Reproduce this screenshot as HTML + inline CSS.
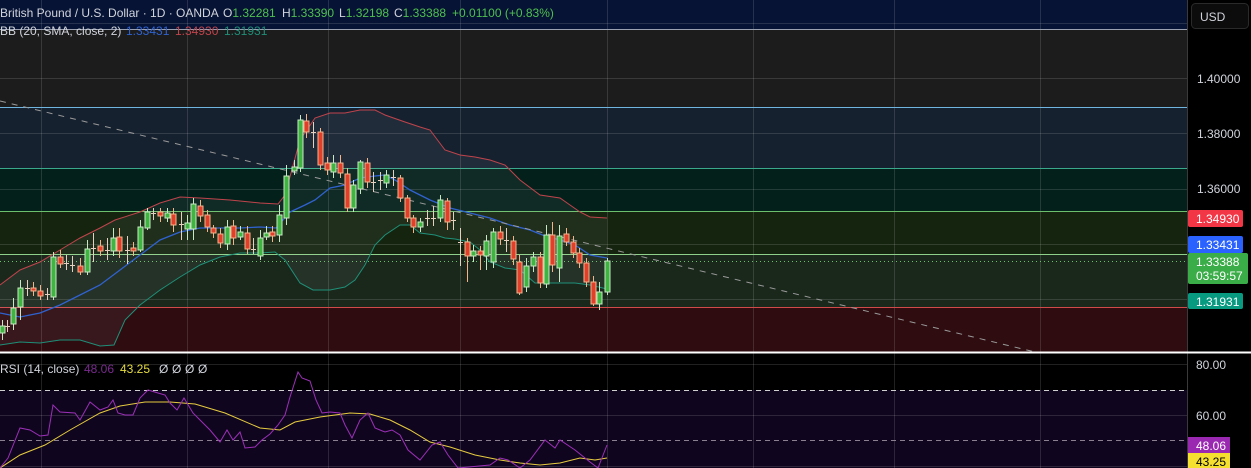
<!DOCTYPE html>
<html><head><meta charset="utf-8"><style>
body{margin:0;background:#000;width:1251px;height:468px;overflow:hidden;font-family:"Liberation Sans",sans-serif}
svg{display:block}
</style></head><body>
<svg width="1251" height="468" xmlns="http://www.w3.org/2000/svg" font-family="Liberation Sans, sans-serif">
<rect x="0" y="0" width="1251" height="468" fill="#000"/>
<rect x="0" y="0" width="1187" height="29" fill="#061334"/>
<rect x="0" y="29" width="1187" height="78" fill="#1c1c1c"/>
<rect x="0" y="107" width="1187" height="61" fill="#15212f"/>
<rect x="0" y="168" width="1187" height="43" fill="#04201b"/>
<rect x="0" y="211" width="1187" height="43" fill="#15240f"/>
<rect x="0" y="254" width="1187" height="53" fill="#1a281c"/>
<rect x="0" y="307" width="1187" height="45" fill="#2e0c10"/>
<rect x="0" y="390" width="1187" height="78" fill="#10051e"/>
<g stroke="#ffffff" stroke-opacity="0.13" stroke-width="1">
<line x1="0" y1="23.5" x2="1187" y2="23.5"/>
<line x1="0" y1="78.5" x2="1187" y2="78.5"/>
<line x1="0" y1="133.5" x2="1187" y2="133.5"/>
<line x1="0" y1="189.5" x2="1187" y2="189.5"/>
<line x1="0" y1="244.5" x2="1187" y2="244.5"/>
<line x1="0" y1="299.5" x2="1187" y2="299.5"/>
<line x1="0" y1="364.5" x2="1187" y2="364.5"/>
<line x1="0" y1="415.5" x2="1187" y2="415.5"/>
<line x1="0" y1="466.5" x2="1187" y2="466.5"/>
<line x1="41.5" y1="0" x2="41.5" y2="468"/>
<line x1="187.5" y1="0" x2="187.5" y2="468"/>
<line x1="328.5" y1="0" x2="328.5" y2="468"/>
<line x1="460.5" y1="0" x2="460.5" y2="468"/>
<line x1="607.5" y1="0" x2="607.5" y2="468"/>
<line x1="753.5" y1="0" x2="753.5" y2="468"/>
<line x1="894.5" y1="0" x2="894.5" y2="468"/>
<line x1="1040.5" y1="0" x2="1040.5" y2="468"/>
</g>
<line x1="0" y1="29.5" x2="1187" y2="29.5" stroke="#9aa0b0"/>
<line x1="0" y1="107.5" x2="1187" y2="107.5" stroke="#6fb5e0"/>
<line x1="0" y1="168.5" x2="1187" y2="168.5" stroke="#3aa88a"/>
<line x1="0" y1="211.5" x2="1187" y2="211.5" stroke="#6cbf6c"/>
<line x1="0" y1="254.5" x2="1187" y2="254.5" stroke="#8fd08a"/>
<line x1="0" y1="261.5" x2="1187" y2="261.5" stroke="#6cbf6c" stroke-dasharray="1 3"/>
<line x1="0" y1="307.5" x2="1187" y2="307.5" stroke="#d04a4a"/>
<line x1="0" y1="352.5" x2="1187" y2="352.5" stroke="#ffffff" stroke-width="2"/>
<line x1="0" y1="390.5" x2="1187" y2="390.5" stroke="#cfcfcf" stroke-dasharray="5 4"/>
<line x1="0" y1="440.5" x2="1187" y2="440.5" stroke="#8a8090" stroke-dasharray="5 4"/>
<polygon fill="#ffffff" fill-opacity="0.05" points="0,285 20,270 40,262 60,250 80,238 100,228 115,220 140,212 160,203 180,197 200,198 230,200 260,203 278,204 285,195 300,140 315,118 330,113 345,113 360,110 375,110 385,115 405,122 420,127 430,130 445,150 460,155 475,157 490,160 505,165 520,180 540,195 560,198 570,205 580,212 590,217 607,218 607,289 590,285 575,283 560,283 545,283 535,283 520,270 505,268 490,262 480,250 470,242 455,239 445,238 435,235 420,233 410,225 400,225 385,235 375,245 365,265 355,280 345,287 330,290 313,290 300,283 285,260 275,252 260,253 240,253 220,257 200,265 180,277 160,290 140,305 125,320 114,345 100,346 80,340 60,340 40,343 20,342 0,345"/>
<polyline fill="none" stroke="#c0444c" stroke-width="1" points="0,285 20,270 40,262 60,250 80,238 100,228 115,220 140,212 160,203 180,197 200,198 230,200 260,203 278,204 285,195 300,140 315,118 330,113 345,113 360,110 375,110 385,115 405,122 420,127 430,130 445,150 460,155 475,157 490,160 505,165 520,180 540,195 560,198 570,205 580,212 590,217 607,218"/>
<polyline fill="none" stroke="#2f62d0" stroke-width="1.3" points="0,313 20,317 40,313 60,305 80,295 100,285 120,270 140,255 160,240 180,232 200,228 220,228 240,228 260,227 276,228 290,212 305,205 315,200 330,188 345,185 360,178 375,176 385,175 395,180 410,190 430,200 450,208 470,213 490,218 510,225 530,230 545,236 560,240 575,245 590,255 607,258"/>
<polyline fill="none" stroke="#1f8f78" stroke-width="1" points="0,345 20,342 40,343 60,340 80,340 100,346 114,345 125,320 140,305 160,290 180,277 200,265 220,257 240,253 260,253 275,252 285,260 300,283 313,290 330,290 345,287 355,280 365,265 375,245 385,235 400,225 410,225 420,233 435,235 445,238 455,239 470,242 480,250 490,262 505,268 520,270 535,283 545,283 560,283 575,283 590,285 607,289"/>
<line x1="0" y1="101" x2="1035" y2="352" stroke="#9a9a9a" stroke-width="1" stroke-dasharray="6 6"/>
<g stroke-width="1">
<g stroke="#c8e8c4" fill="#3fb440">
<line x1="2.5" y1="320" x2="2.5" y2="340"/><rect x="0" y="326" width="5" height="7"/>
<line x1="13.5" y1="298" x2="13.5" y2="330"/><rect x="11" y="308" width="5" height="16"/>
<line x1="20.5" y1="280" x2="20.5" y2="320"/><rect x="18" y="288" width="5" height="19"/>
<line x1="53.5" y1="252" x2="53.5" y2="300"/><rect x="51" y="257" width="5" height="40"/>
<line x1="87.5" y1="240" x2="87.5" y2="275"/><rect x="85" y="249" width="5" height="23"/>
<line x1="113.5" y1="228" x2="113.5" y2="256"/><rect x="111" y="238" width="5" height="13"/>
<line x1="140.5" y1="220" x2="140.5" y2="252"/><rect x="138" y="227" width="5" height="23"/>
<line x1="147.5" y1="208" x2="147.5" y2="230"/><rect x="145" y="212" width="5" height="16"/>
<line x1="167.5" y1="208" x2="167.5" y2="222"/><rect x="165" y="213" width="5" height="5"/>
<line x1="187.5" y1="215" x2="187.5" y2="240"/><rect x="185" y="223" width="5" height="6"/>
<line x1="193.5" y1="198" x2="193.5" y2="240"/><rect x="191" y="204" width="5" height="25"/>
<line x1="227.5" y1="220" x2="227.5" y2="250"/><rect x="225" y="227" width="5" height="17"/>
<line x1="240.5" y1="226" x2="240.5" y2="240"/><rect x="238" y="232" width="5" height="5"/>
<line x1="260.5" y1="230" x2="260.5" y2="260"/><rect x="258" y="238" width="5" height="18"/>
<line x1="266.5" y1="226" x2="266.5" y2="240"/><rect x="264" y="233" width="5" height="4"/>
<line x1="279.5" y1="205" x2="279.5" y2="242"/><rect x="277" y="215" width="5" height="20"/>
<line x1="286.5" y1="165" x2="286.5" y2="225"/><rect x="284" y="176" width="5" height="42"/>
<line x1="294.5" y1="160" x2="294.5" y2="175"/><rect x="292" y="167" width="5" height="4"/>
<line x1="300.5" y1="115" x2="300.5" y2="172"/><rect x="298" y="120" width="5" height="48"/>
<line x1="333.5" y1="155" x2="333.5" y2="178"/><rect x="331" y="163" width="5" height="9"/>
<line x1="353.5" y1="180" x2="353.5" y2="212"/><rect x="351" y="185" width="5" height="23"/>
<line x1="360.5" y1="160" x2="360.5" y2="194"/><rect x="358" y="162" width="5" height="27"/>
<line x1="386.5" y1="170" x2="386.5" y2="188"/><rect x="384" y="175" width="5" height="8"/>
<line x1="420.5" y1="218" x2="420.5" y2="232"/><rect x="418" y="222" width="5" height="5"/>
<line x1="440.5" y1="195" x2="440.5" y2="222"/><rect x="438" y="200" width="5" height="18"/>
<line x1="473.5" y1="245" x2="473.5" y2="262"/><rect x="471" y="251" width="5" height="5"/>
<line x1="486.5" y1="235" x2="486.5" y2="270"/><rect x="484" y="241" width="5" height="15"/>
<line x1="493.5" y1="228" x2="493.5" y2="268"/><rect x="491" y="232" width="5" height="30"/>
<line x1="526.5" y1="258" x2="526.5" y2="292"/><rect x="524" y="266" width="5" height="21"/>
<line x1="533.5" y1="252" x2="533.5" y2="272"/><rect x="531" y="257" width="5" height="9"/>
<line x1="546.5" y1="225" x2="546.5" y2="288"/><rect x="544" y="235" width="5" height="49"/>
<line x1="559.5" y1="225" x2="559.5" y2="282"/><rect x="557" y="236" width="5" height="32"/>
<line x1="599.5" y1="282" x2="599.5" y2="310"/><rect x="597" y="292" width="5" height="12"/>
<line x1="607.5" y1="258" x2="607.5" y2="295"/><rect x="605" y="261" width="5" height="31"/>
</g>
<g stroke="#f3b48c" fill="#e0402a">
<line x1="33.5" y1="282" x2="33.5" y2="296"/><rect x="31" y="288" width="5" height="3"/>
<line x1="40.5" y1="285" x2="40.5" y2="300"/><rect x="38" y="291" width="5" height="5"/>
<line x1="60.5" y1="250" x2="60.5" y2="268"/><rect x="58" y="257" width="5" height="7"/>
<line x1="80.5" y1="258" x2="80.5" y2="275"/><rect x="78" y="266" width="5" height="6"/>
<line x1="100.5" y1="240" x2="100.5" y2="256"/><rect x="98" y="246" width="5" height="5"/>
<line x1="119.5" y1="228" x2="119.5" y2="258"/><rect x="117" y="237" width="5" height="14"/>
<line x1="133.5" y1="242" x2="133.5" y2="256"/><rect x="131" y="248" width="5" height="3"/>
<line x1="160.5" y1="208" x2="160.5" y2="222"/><rect x="158" y="212" width="5" height="4"/>
<line x1="173.5" y1="208" x2="173.5" y2="232"/><rect x="171" y="214" width="5" height="11"/>
<line x1="200.5" y1="200" x2="200.5" y2="222"/><rect x="198" y="206" width="5" height="10"/>
<line x1="207.5" y1="210" x2="207.5" y2="232"/><rect x="205" y="215" width="5" height="12"/>
<line x1="213.5" y1="225" x2="213.5" y2="238"/><rect x="211" y="228" width="5" height="5"/>
<line x1="220.5" y1="228" x2="220.5" y2="248"/><rect x="218" y="234" width="5" height="9"/>
<line x1="233.5" y1="220" x2="233.5" y2="245"/><rect x="231" y="226" width="5" height="12"/>
<line x1="247.5" y1="226" x2="247.5" y2="254"/><rect x="245" y="233" width="5" height="16"/>
<line x1="272.5" y1="226" x2="272.5" y2="242"/><rect x="270" y="232" width="5" height="4"/>
<line x1="306.5" y1="114" x2="306.5" y2="138"/><rect x="304" y="121" width="5" height="11"/>
<line x1="320.5" y1="128" x2="320.5" y2="170"/><rect x="318" y="132" width="5" height="33"/>
<line x1="327.5" y1="157" x2="327.5" y2="175"/><rect x="325" y="163" width="5" height="7"/>
<line x1="340.5" y1="155" x2="340.5" y2="178"/><rect x="338" y="163" width="5" height="10"/>
<line x1="347.5" y1="168" x2="347.5" y2="212"/><rect x="345" y="174" width="5" height="34"/>
<line x1="367.5" y1="158" x2="367.5" y2="188"/><rect x="365" y="163" width="5" height="19"/>
<line x1="400.5" y1="175" x2="400.5" y2="202"/><rect x="398" y="178" width="5" height="20"/>
<line x1="407.5" y1="195" x2="407.5" y2="222"/><rect x="405" y="198" width="5" height="20"/>
<line x1="413.5" y1="215" x2="413.5" y2="233"/><rect x="411" y="218" width="5" height="9"/>
<line x1="447.5" y1="198" x2="447.5" y2="230"/><rect x="445" y="201" width="5" height="21"/>
<line x1="467.5" y1="238" x2="467.5" y2="282"/><rect x="465" y="242" width="5" height="14"/>
<line x1="480.5" y1="246" x2="480.5" y2="270"/><rect x="478" y="251" width="5" height="4"/>
<line x1="500.5" y1="226" x2="500.5" y2="245"/><rect x="498" y="232" width="5" height="7"/>
<line x1="513.5" y1="236" x2="513.5" y2="265"/><rect x="511" y="241" width="5" height="18"/>
<line x1="519.5" y1="255" x2="519.5" y2="295"/><rect x="517" y="262" width="5" height="31"/>
<line x1="540.5" y1="252" x2="540.5" y2="288"/><rect x="538" y="257" width="5" height="26"/>
<line x1="552.5" y1="222" x2="552.5" y2="272"/><rect x="550" y="235" width="5" height="30"/>
<line x1="566.5" y1="228" x2="566.5" y2="246"/><rect x="564" y="234" width="5" height="8"/>
<line x1="573.5" y1="236" x2="573.5" y2="258"/><rect x="571" y="242" width="5" height="11"/>
<line x1="579.5" y1="248" x2="579.5" y2="268"/><rect x="577" y="253" width="5" height="10"/>
<line x1="586.5" y1="258" x2="586.5" y2="287"/><rect x="584" y="263" width="5" height="19"/>
<line x1="593.5" y1="276" x2="593.5" y2="306"/><rect x="591" y="282" width="5" height="22"/>
</g>
<g stroke="#e8d0c0">
<line x1="7.5" y1="320" x2="7.5" y2="332"/><line x1="5" y1="326.5" x2="10" y2="326.5"/>
<line x1="27.5" y1="280" x2="27.5" y2="296"/><line x1="25" y1="288.5" x2="30" y2="288.5"/>
<line x1="47.5" y1="288" x2="47.5" y2="300"/><line x1="45" y1="294.5" x2="50" y2="294.5"/>
<line x1="66.5" y1="255" x2="66.5" y2="270"/><line x1="64" y1="263.5" x2="69" y2="263.5"/>
<line x1="72.5" y1="256" x2="72.5" y2="272"/><line x1="70" y1="265.5" x2="75" y2="265.5"/>
<line x1="93.5" y1="233" x2="93.5" y2="262"/><line x1="91" y1="248.5" x2="96" y2="248.5"/>
<line x1="107.5" y1="238" x2="107.5" y2="260"/><line x1="105" y1="250.5" x2="110" y2="250.5"/>
<line x1="127.5" y1="236" x2="127.5" y2="264"/><line x1="125" y1="250.5" x2="130" y2="250.5"/>
<line x1="153.5" y1="208" x2="153.5" y2="220"/><line x1="151" y1="213.5" x2="156" y2="213.5"/>
<line x1="181.5" y1="212" x2="181.5" y2="240"/><line x1="179" y1="224.5" x2="184" y2="224.5"/>
<line x1="253.5" y1="238" x2="253.5" y2="254"/><line x1="251" y1="249.5" x2="256" y2="249.5"/>
<line x1="313.5" y1="122" x2="313.5" y2="148"/><line x1="311" y1="132.5" x2="316" y2="132.5"/>
<line x1="373.5" y1="172" x2="373.5" y2="192"/><line x1="371" y1="182.5" x2="376" y2="182.5"/>
<line x1="380.5" y1="172" x2="380.5" y2="190"/><line x1="378" y1="180.5" x2="383" y2="180.5"/>
<line x1="393.5" y1="170" x2="393.5" y2="186"/><line x1="391" y1="177.5" x2="396" y2="177.5"/>
<line x1="427.5" y1="210" x2="427.5" y2="226"/><line x1="425" y1="218.5" x2="430" y2="218.5"/>
<line x1="433.5" y1="206" x2="433.5" y2="226"/><line x1="431" y1="218.5" x2="436" y2="218.5"/>
<line x1="453.5" y1="212" x2="453.5" y2="230"/><line x1="451" y1="220.5" x2="456" y2="220.5"/>
<line x1="460.5" y1="228" x2="460.5" y2="266"/><line x1="458" y1="242.5" x2="463" y2="242.5"/>
<line x1="506.5" y1="228" x2="506.5" y2="252"/><line x1="504" y1="240.5" x2="509" y2="240.5"/>
</g>
</g>
<polyline fill="none" stroke="#e6cc40" stroke-width="1" points="0,468 20,455 45,445 70,430 100,413 120,406 145,402 170,402 195,404 225,413 260,428 280,430 295,422 320,417 350,413 370,414 390,420 410,430 430,442 450,447 475,455 500,460 520,463 540,465 560,463 580,458 595,460 607,458"/>
<polyline fill="none" stroke="#9c30b8" stroke-width="1" points="0,468 8,458 20,428 30,430 40,436 48,435 53,405 60,412 75,413 80,420 90,402 100,410 108,407 113,400 118,413 125,415 133,415 140,398 148,390 158,393 165,395 170,403 177,410 184,398 193,413 200,420 210,430 220,442 227,430 233,440 240,432 245,448 255,447 262,440 270,434 278,425 285,415 290,397 298,372 302,378 310,381 316,400 322,413 330,412 340,413 345,425 352,438 360,420 368,413 375,428 385,432 392,430 400,435 408,450 420,460 432,445 440,442 448,455 458,468 490,465 500,458 508,460 520,468 530,460 545,440 555,448 560,440 575,450 590,462 598,468 607,445"/>
<g font-size="12" fill="#d1d4dc">
<text x="0" y="17">British Pound / U.S. Dollar · 1D · OANDA</text>
<text x="223" y="17">O<tspan fill="#4fc04f">1.32281</tspan></text>
<text x="282" y="17">H<tspan fill="#4fc04f">1.33390</tspan></text>
<text x="339" y="17">L<tspan fill="#4fc04f">1.32198</tspan></text>
<text x="394" y="17">C<tspan fill="#4fc04f">1.33388</tspan></text>
<text x="452" y="17" fill="#4fc04f">+0.01100 (+0.83%)</text>
<text x="0" y="35">BB (20, SMA, close, 2)</text>
<text x="126" y="35" fill="#2f62d0">1.33431</text>
<text x="175" y="35" fill="#c0444c">1.34930</text>
<text x="224" y="35" fill="#1f8f78">1.31931</text>
<text x="0" y="373">RSI (14, close)</text>
<text x="84" y="373" fill="#7a2a90">48.06</text>
<text x="120" y="373" fill="#e6dc40">43.25</text>
<text x="159" y="373">Ø</text><text x="172" y="373">Ø</text><text x="185" y="373">Ø</text><text x="198" y="373">Ø</text>
</g>
<rect x="1187" y="0" width="64" height="468" fill="#000"/>
<line x1="1187.5" y1="0" x2="1187.5" y2="468" stroke="#3a3a3a"/>
<line x1="1187" y1="352.5" x2="1251" y2="352.5" stroke="#ffffff" stroke-width="2"/>
<rect x="1191.5" y="3.5" width="57" height="25" rx="4" fill="#0c0c0c" stroke="#2a2a2a"/>
<g font-size="12" fill="#d1d4dc">
<text x="1200" y="21">USD</text>
<text x="1197" y="83">1.40000</text>
<text x="1197" y="138">1.38000</text>
<text x="1197" y="193">1.36000</text>
<text x="1196" y="369">80.00</text>
<text x="1196" y="420">60.00</text>
</g>
<rect x="1188" y="210" width="55" height="17" rx="2" fill="#f23645"/>
<rect x="1188" y="236" width="55" height="17" rx="2" fill="#2962ff"/>
<rect x="1188" y="253" width="60" height="31" rx="2" fill="#3aac48"/>
<rect x="1188" y="293" width="55" height="16" rx="2" fill="#089981"/>
<rect x="1188" y="437" width="42" height="16" fill="#9a28b0"/>
<rect x="1188" y="453" width="42" height="15" fill="#f5e030"/>
<g font-size="12" fill="#ffffff">
<text x="1196" y="223">1.34930</text>
<text x="1196" y="249">1.33431</text>
<text x="1196" y="266">1.33388</text>
<text x="1196" y="280">03:59:57</text>
<text x="1196" y="306">1.31931</text>
<text x="1196" y="450">48.06</text>
<text x="1196" y="466" fill="#000">43.25</text>
</g>
</svg>
</body></html>
